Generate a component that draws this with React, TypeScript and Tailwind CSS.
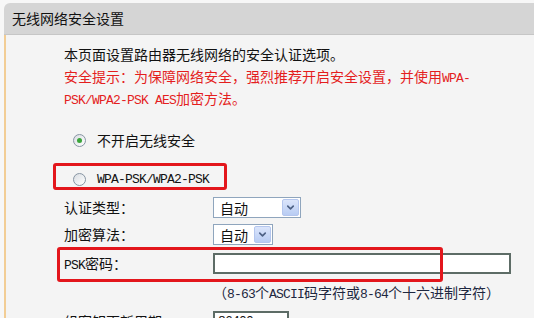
import React from 'react';
import { ChevronDown } from 'lucide-react';

const CJK = "font-['Noto_Sans_CJK_SC','Noto_Sans',sans-serif]";
const MONO = "font-['Liberation_Mono','DejaVu_Sans_Mono',monospace] text-[13px] tracking-[-0.8px] leading-none";

function Ascii({ children }: { children: React.ReactNode }) {
    return <span className={MONO}>{children}</span>;
}

function Radio({ checked }: { checked?: boolean }) {
    return (
        <span className="w-[13px] h-[13px] rounded-full border border-[#8795a3] bg-gradient-to-br from-[#d9dde2] to-white flex items-center justify-center shrink-0">
            {checked && <span className="w-[5px] h-[5px] rounded-full bg-[#3aa53a]" />}
        </span>
    );
}

function Select({ width }: { width: string }) {
    return (
        <div className={`${width} h-[21px] border border-[#8fa5bd] bg-white flex items-center justify-between pl-[6px] pr-[1px]`}>
            <span className="text-[14px] leading-none">自动</span>
            <span className="w-[17px] h-[17px] border border-[#b4c6ee] rounded-[2px] bg-gradient-to-b from-[#dbe5fb] to-[#b8ccf3] flex items-center justify-center">
                <ChevronDown size={11} strokeWidth={3.5} color="#4d6185" />
            </span>
        </div>
    );
}

export default function App() {
    return (
        <div className={`w-[534px] h-[318px] overflow-hidden bg-[#f7f7f7] pt-[3px] pl-[4px] text-[#111] ${CJK}`}>
            {/* Title bar */}
            <div className="h-[32px] bg-[#d5d5d5] border-b border-[#c6c6c6] rounded-tl-[6px] flex items-center pl-[8px] text-[14px]">
                无线网络安全设置
            </div>

            {/* Body */}
            <div className="h-[300px] bg-[#f4f4f4] border-l-2 border-[#f2cd95] pl-[58px] pt-[8px] text-[14px]">
                <p className="leading-[22px]">本页面设置路由器无线网络的安全认证选项。</p>
                <p className="leading-[22px] text-[#e41e1e] w-[420px]">
                    安全提示：为保障网络安全，强烈推荐开启安全设置，并使用<Ascii>WPA-</Ascii>
                    <br />
                    <Ascii>PSK/WPA2-PSK AES</Ascii>加密方法。
                </p>

                <div className="mt-[20px] h-[22px] flex items-center pl-[9px] gap-[11px]">
                    <Radio checked />
                    <span>不开启无线安全</span>
                </div>

                <div className="relative mt-[17px] h-[22px] flex items-center pl-[9px] gap-[11px]">
                    <Radio />
                    <Ascii>WPA-PSK/WPA2-PSK</Ascii>
                    <div className="absolute -left-[11px] -top-[5px] w-[174px] h-[27px] border-[3px] border-[#e3161c] rounded-[3px]" />
                </div>

                <div className="mt-[7px] grid grid-cols-[149px_1fr] items-center h-[21px]">
                    <span>认证类型：</span>
                    <Select width="w-[88px]" />
                </div>

                <div className="mt-[6px] grid grid-cols-[149px_1fr] items-center h-[21px]">
                    <span>加密算法：</span>
                    <Select width="w-[60px]" />
                </div>

                <div className="relative mt-[8px] grid grid-cols-[149px_1fr] items-center h-[21px]">
                    <span><Ascii>PSK</Ascii>密码：</span>
                    <div className="w-[298px] h-[21px] border-2 border-[#5d6c66] bg-white" />
                    <div className="absolute -left-[7px] -top-[6px] w-[386px] h-[35px] border-[3px] border-[#e3161c] rounded-[3px]" />
                </div>

                <div className="mt-[8px] pl-[149px] leading-[20px] text-[#1d2740]">
                    （<Ascii>8-63</Ascii>个<Ascii>ASCII</Ascii>码字符或<Ascii>8-64</Ascii>个十六进制字符）
                </div>

                <div className="mt-[9px] grid grid-cols-[149px_1fr] items-center h-[21px]">
                    <span>组密钥更新周期：</span>
                    <div className="w-[76px] h-[21px] border-2 border-[#5d6c66] bg-white pl-[3px] flex items-center">
                        <Ascii>86400</Ascii>
                    </div>
                </div>
            </div>
        </div>
    );
}
